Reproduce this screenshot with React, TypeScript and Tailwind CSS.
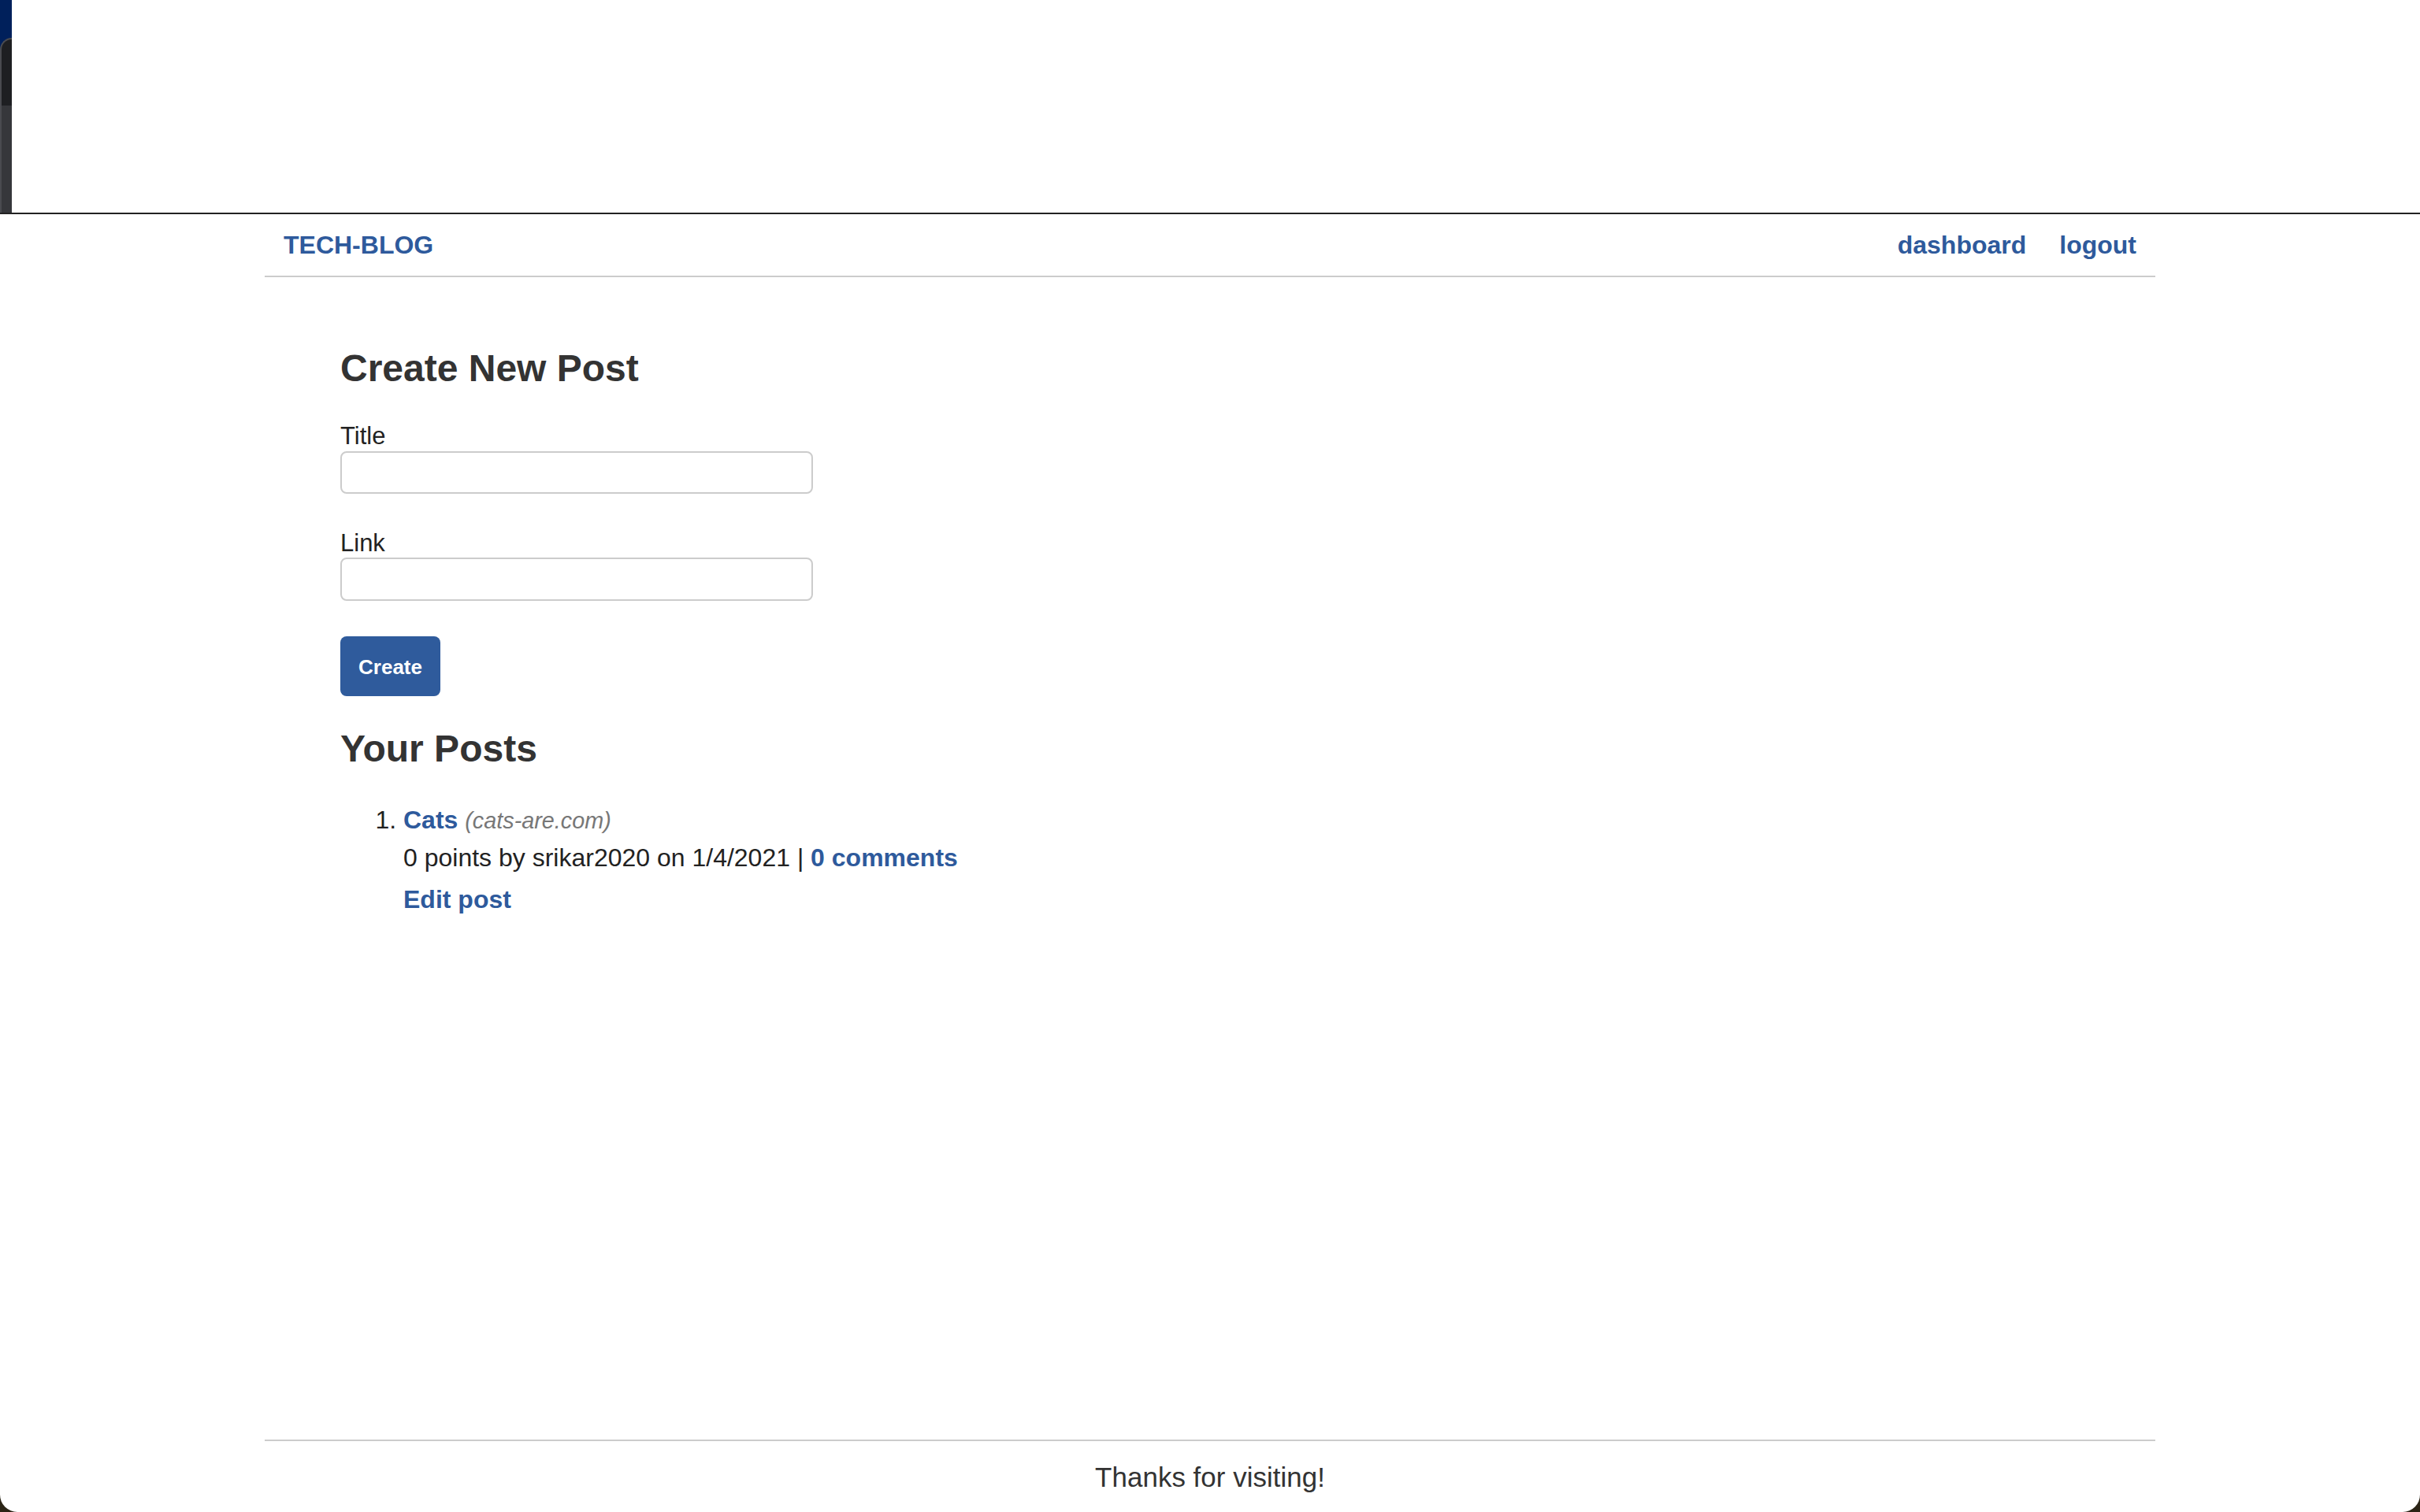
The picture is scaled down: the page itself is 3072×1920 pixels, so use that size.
import React from 'react';

const BLUE = 'text-[#2e5a9c]';

function WindowEdge() {
  // leftover strip of the desktop behind the browser window
  return (
    <div className="w-[15px] shrink-0 bg-[#00205b] pt-[48px]">
      <div className="flex h-full flex-col justify-end rounded-tl-[15px] border-l-2 border-t-2 border-[#4a4b50] bg-[#1e1f22]">
        <div className="h-[136px] bg-[#36373b]" />
      </div>
    </div>
  );
}

function Header() {
  return (
    <header className="flex h-[80px] items-center justify-between border-b-2 border-[#cccccc] px-[24px]">
      <a href="#" className={`text-[32px] leading-[40px] font-bold ${BLUE}`}>
        TECH-BLOG
      </a>
      <nav className="flex items-center gap-[42px]">
        <a href="#" className={`text-[32px] leading-[40px] font-bold ${BLUE}`}>
          dashboard
        </a>
        <a href="#" className={`text-[32px] leading-[40px] font-bold ${BLUE}`}>
          logout
        </a>
      </nav>
    </header>
  );
}

function NewPostForm() {
  return (
    <form onSubmit={(e) => e.preventDefault()}>
      <h2 className="text-[48px] leading-[55px] font-bold text-[#333333]">Create New Post</h2>

      <label htmlFor="post-title" className="mt-[41px] block text-[31px] leading-[36px] text-[#222222]">
        Title
      </label>
      <input
        id="post-title"
        type="text"
        className="mt-[1px] block h-[54px] w-[600px] rounded-[8px] border-2 border-[#cccccc] px-3 text-[28px] outline-none"
      />

      <label htmlFor="post-url" className="mt-[45px] block text-[31px] leading-[36px] text-[#222222]">
        Link
      </label>
      <input
        id="post-url"
        type="text"
        className="block h-[55px] w-[600px] rounded-[8px] border-2 border-[#cccccc] px-3 text-[28px] outline-none"
      />

      <button
        type="submit"
        className="mt-[45px] flex h-[76px] w-[127px] items-center justify-center rounded-[8px] bg-[#2f5b9c] pt-[2px] text-[26px] leading-[30px] font-bold text-white"
      >
        Create
      </button>
    </form>
  );
}

const posts = [
  { id: 1, title: 'Cats', domain: 'cats-are.com', points: 0, user: 'srikar2020', date: '1/4/2021', comments: 0 },
];

function PostList() {
  return (
    <section>
      <h2 className="mt-[39px] text-[48px] leading-[55px] font-bold text-[#333333]">Your Posts</h2>
      <ol className="mt-[39px] list-decimal pl-[80px] text-[32px] leading-[48px] text-[#222222]">
        {posts.map((post) => (
          <li key={post.id}>
            <div>
              <a href="#" className={`font-bold ${BLUE}`}>
                {post.title}
              </a>{' '}
              <span className="text-[28.8px] leading-none italic text-[#777777]">({post.domain})</span>
            </div>
            <div>
              {post.points} points by {post.user} on {post.date} |{' '}
              <a href="#" className={`font-bold ${BLUE}`}>
                {post.comments} comments
              </a>
            </div>
            <div className="mt-[5px]">
              <a href="#" className={`font-bold ${BLUE}`}>
                Edit post
              </a>
            </div>
          </li>
        ))}
      </ol>
    </section>
  );
}

export default function App() {
  return (
    <div className="flex h-screen w-full flex-col bg-[#2b2416] font-['Liberation_Sans',Arial,sans-serif]">
      <div className="flex h-[270px] shrink-0 bg-white">
        <WindowEdge />
        <div className="flex-1" />
      </div>
      <div className="h-[2px] shrink-0 bg-[#222222]" />

      <div className="flex flex-1 flex-col rounded-b-[22px] bg-white">
        <div className="mx-auto flex w-[2400px] flex-1 flex-col">
          <Header />
          <main className="pt-[88px] pl-[96px]">
            <NewPostForm />
            <PostList />
          </main>
          <footer className="mt-auto border-t-2 border-[#cccccc] pt-[26px] pb-[24px] text-center text-[35px] leading-[40px] text-[#333333]">
            Thanks for visiting!
          </footer>
        </div>
      </div>
    </div>
  );
}
